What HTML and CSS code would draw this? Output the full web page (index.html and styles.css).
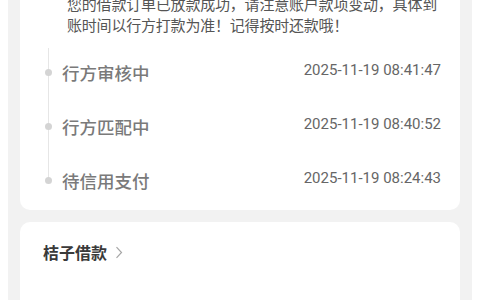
FILE: index.html
```html
<!DOCTYPE html>
<html lang="zh-CN">
<head>
<meta charset="utf-8">
<link rel="stylesheet" href="styles.css">
</head>
<body>
<div class="page">
  <section class="card card-progress">
    <p class="notice">您的借款订单已放款成功，请注意账户款项变动，具体到账时间以行方打款为准！记得按时还款哦！</p>
    <ul class="timeline">
      <li class="step"><span class="step-title">行方审核中</span><span class="step-time">2025-11-19 08:41:47</span></li>
      <li class="step"><span class="step-title">行方匹配中</span><span class="step-time">2025-11-19 08:40:52</span></li>
      <li class="step"><span class="step-title">待信用支付</span><span class="step-time">2025-11-19 08:24:43</span></li>
    </ul>
  </section>
  <section class="card card-lender">
    <div class="lender">
      <span class="lender-name">桔子借款</span>
      <svg class="chevron" width="8" height="13" viewBox="0 0 8 13"><path d="M1.5 1.2 L6.5 6.5 L1.5 11.8" fill="none" stroke="#a6a6a6" stroke-width="1.2"/></svg>
    </div>
  </section>
</div>
</body>
</html>
```
FILE: styles.css
```css
html, body {
  margin: 0;
  padding: 0;
  background: #ffffff;
}
body {
  padding: 0 8px;
  height: 300px;
  overflow: hidden;
  font-family: Roboto, "Noto Sans CJK SC", sans-serif;
}
.page {
  background: #f2f2f2;
  padding: 0 12px 12px;
  height: 320px;
  display: flex;
  flex-direction: column;
  gap: 12.5px;
}
.card {
  background: #ffffff;
  border-radius: 10px;
}
.card-progress {
  border-top-left-radius: 0;
  border-top-right-radius: 0;
  padding: 0 19px 16px 28px;
}
.notice {
  margin: -5.5px 0 0 19px;
  font-size: 15px;
  line-height: 21px;
  color: #555555;
  letter-spacing: -0.2px;
}
.timeline {
  list-style: none;
  margin: 25px 0 0 0;
  padding: 0 0 0 14px;
  position: relative;
}
.timeline::before {
  content: "";
  position: absolute;
  left: 0;
  top: -14px;
  bottom: 14px;
  width: 1px;
  background: #e6e6e6;
}
.step {
  display: flex;
  justify-content: space-between;
  align-items: flex-start;
  height: 54px;
  position: relative;
}
.step:last-child {
  height: 24px;
}
.step::before {
  content: "";
  position: absolute;
  left: -17px;
  top: 7px;
  width: 7px;
  height: 7px;
  border-radius: 50%;
  background: #d4d4d4;
}
.step-title {
  font-size: 17.5px;
  line-height: 24px;
  color: #7a7a7a;
  font-weight: 500;
}
.step-time {
  font-size: 15px;
  line-height: 16px;
  color: #666666;
}
.card-lender {
  flex: 1;
  padding: 19px 23px 0;
}
.lender {
  display: flex;
  align-items: center;
  gap: 8px;
  height: 22px;
}
.lender-name {
  font-size: 16px;
  font-weight: 700;
  color: #3a3a3a;
}
.chevron {
  display: block;
}
```
